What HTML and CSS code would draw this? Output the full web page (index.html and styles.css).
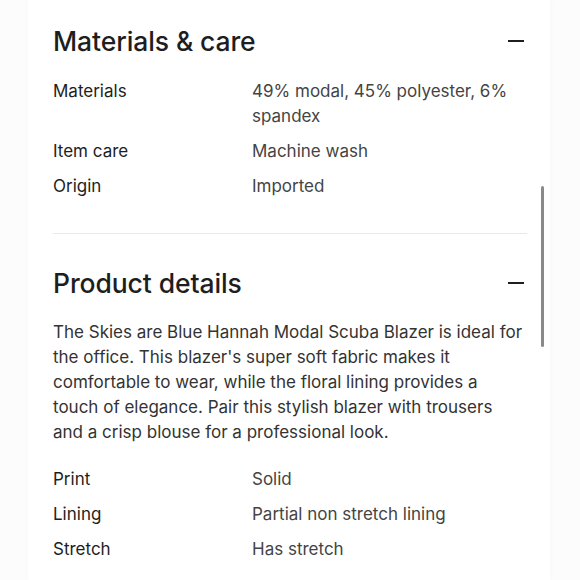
FILE: index.html
```html
<!DOCTYPE html>
<html>
<head>
<meta charset="utf-8">
<link rel="stylesheet" href="styles.css">
</head>
<body>
<div class="card">
  <section class="section">
    <div class="head">
      <h2 class="title">Materials &amp; care</h2>
      <span class="minus"></span>
    </div>
    <dl class="specs">
      <div class="row"><dt>Materials</dt><dd>49% modal, 45% polyester, 6% spandex</dd></div>
      <div class="row"><dt>Item care</dt><dd>Machine wash</dd></div>
      <div class="row"><dt>Origin</dt><dd>Imported</dd></div>
    </dl>
  </section>
  <hr class="divider">
  <section class="section second">
    <div class="head">
      <h2 class="title">Product details</h2>
      <span class="minus"></span>
    </div>
    <p class="desc">The Skies are Blue Hannah Modal Scuba Blazer is ideal for the office. This blazer's super soft fabric makes it comfortable to wear, while the floral lining provides a touch of elegance. Pair this stylish blazer with trousers and a crisp blouse for a professional look.</p>
    <dl class="specs">
      <div class="row"><dt>Print</dt><dd>Solid</dd></div>
      <div class="row"><dt>Lining</dt><dd>Partial non stretch lining</dd></div>
      <div class="row"><dt>Stretch</dt><dd>Has stretch</dd></div>
    </dl>
  </section>
  <div class="scrollbar"></div>
</div>
</body>
</html>
```
FILE: styles.css
```css
* { box-sizing: border-box; }
html, body { margin: 0; padding: 0; }
body {
  background: #fcfcfc;
  font-family: Inter, "Noto Sans", sans-serif;
  color: #222;
  width: 580px;
  height: 580px;
  overflow: hidden;
}
.card {
  position: relative;
  margin: 0 0 0 28px;
  padding: 0 23px 0 25px;
  width: 522px;
  height: 580px;
  background: #fff;
  box-shadow: 0 0 8px rgba(0,0,0,0.025);
}
.section { padding-top: 25px; }
.second { padding-top: 33px; }
.head {
  display: flex;
  align-items: center;
  justify-content: space-between;
  height: 32px;
}
.title {
  margin: 0;
  font-size: 26.5px;
  font-weight: 500;
  color: #1e1e1e;
  letter-spacing: -0.1px;
  line-height: 32px;
}
.minus {
  display: block;
  width: 16px;
  height: 2px;
  background: #1e1e1e;
  margin-right: 3px;
}
.specs {
  margin: 0;
  padding: 0;
  display: flex;
  flex-direction: column;
  gap: 10px;
}
.section > .specs { margin-top: 22px; }
.row {
  display: grid;
  grid-template-columns: 199px 1fr;
  font-size: 17px;
  line-height: 25px;
}
dt { color: #1e1e1e; }
dd { margin: 0; color: #444; }
.divider {
  border: 0;
  border-top: 1px solid #e9e9e9;
  margin: 34px 0 0;
}
.desc {
  margin: 21px 0 0;
  font-size: 17px;
  line-height: 25px;
  color: #333;
}
.second > .specs { margin-top: 22px; }
.scrollbar {
  position: absolute;
  left: 513px;
  top: 186px;
  width: 3px;
  height: 161px;
  border-radius: 2px;
  background: #8a8a8a;
}
```
